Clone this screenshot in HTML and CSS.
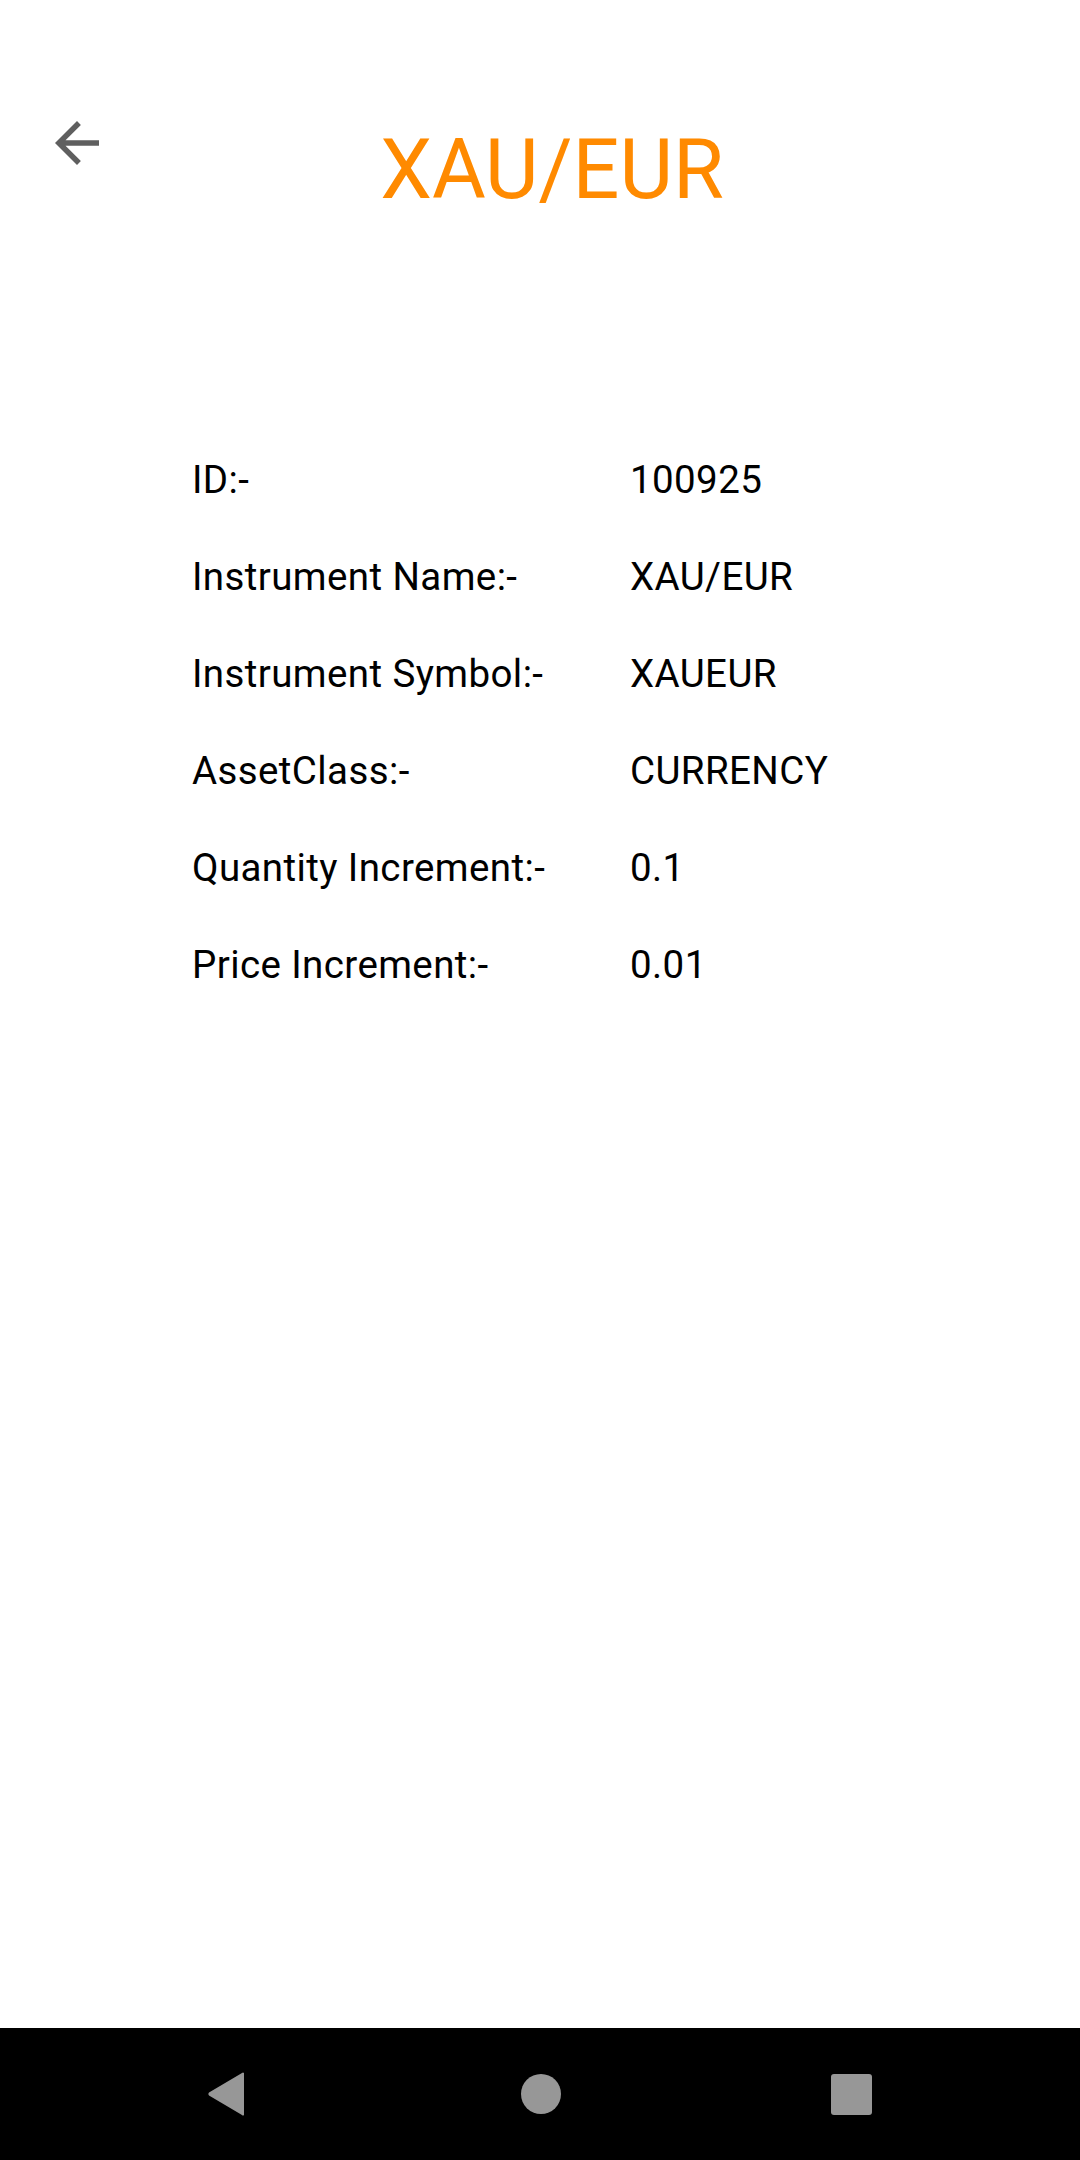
FILE: index.html
```html
<!DOCTYPE html>
<html>
<head>
<meta charset="utf-8">
<link rel="stylesheet" href="styles.css">
</head>
<body>
<div class="screen">
  <header class="header">
    <div class="back">
      <svg viewBox="0 0 24 24" width="66" height="66"><path d="M20 11H7.830l5.590-5.590L12 4l-8 8 8 8 1.410-1.410L7.830 13H20v-2z" fill="#5f5f5f"/></svg>
    </div>
    <h1 class="title">XAU/EUR</h1>
  </header>
  <main class="details">
    <div class="row"><span class="label">ID:-</span><span class="value">100925</span></div>
    <div class="row"><span class="label">Instrument Name:-</span><span class="value">XAU/EUR</span></div>
    <div class="row"><span class="label">Instrument Symbol:-</span><span class="value">XAUEUR</span></div>
    <div class="row"><span class="label">AssetClass:-</span><span class="value">CURRENCY</span></div>
    <div class="row"><span class="label">Quantity Increment:-</span><span class="value">0.1</span></div>
    <div class="row"><span class="label">Price Increment:-</span><span class="value">0.01</span></div>
  </main>
  <nav class="navbar">
    <svg class="nav-back" viewBox="0 0 38 46" width="38" height="46"><path d="M35 2 Q36 1 37 2 L37 44 Q36 45 35 44 L2 24.5 Q0.5 23 2 21.5 Z" fill="#979797"/></svg>
    <span class="nav-home"></span>
    <span class="nav-recent"></span>
  </nav>
</div>
</body>
</html>
```
FILE: styles.css
```css
html, body {
  margin: 0;
  padding: 0;
  background: #ffffff;
}
.screen {
  width: 1080px;
  height: 2160px;
  display: flex;
  flex-direction: column;
  font-family: Roboto, "Noto Sans", sans-serif;
}
.header {
  display: grid;
  grid-template-columns: 1fr;
}
.back {
  grid-area: 1 / 1;
  width: 66px;
  height: 66px;
  margin-left: 44px;
  margin-top: 110px;
}
.back svg {
  display: block;
}
.title {
  grid-area: 1 / 1;
  margin: 120px 0 0 0;
  padding-left: 24px;
  text-align: center;
  font-size: 82.5px;
  line-height: 99px;
  font-weight: 400;
  color: #ff8a00;
}
.details {
  display: flex;
  flex-direction: column;
  padding-top: 212px;
  padding-left: 192px;
}
.row {
  display: flex;
  font-size: 38.5px;
  line-height: 97px;
  height: 97px;
  letter-spacing: 0.4px;
  color: #000000;
}
.label {
  width: 438px;
}
.value {
  flex: 1;
}
.navbar {
  margin-top: auto;
  height: 132px;
  background: #000000;
  display: flex;
  align-items: center;
}
.nav-back {
  display: block;
  margin-left: 207px;
}
.nav-home {
  display: block;
  width: 40px;
  height: 40px;
  border-radius: 50%;
  background: #979797;
  margin-left: 276px;
}
.nav-recent {
  display: block;
  width: 41px;
  height: 41px;
  border-radius: 3px;
  background: #979797;
  margin-left: 270px;
}
```
